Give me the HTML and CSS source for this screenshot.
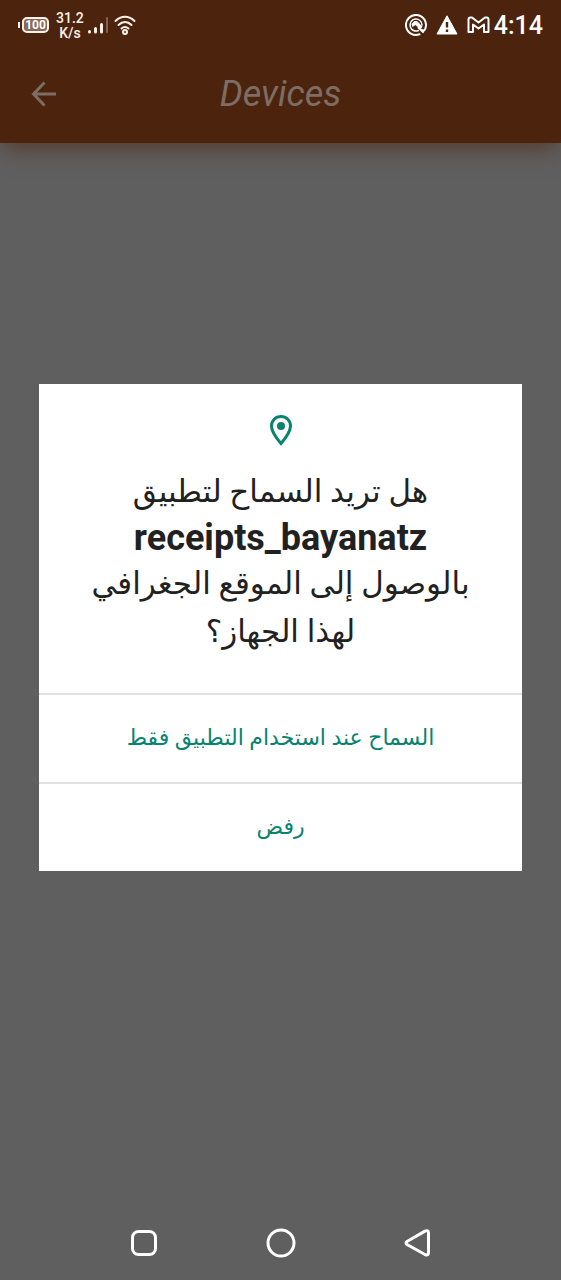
FILE: index.html
```html
<!DOCTYPE html>
<html lang="ar">
<head>
<meta charset="utf-8">
<meta name="viewport" content="width=device-width, initial-scale=1">
<title>Devices</title>
<link rel="stylesheet" href="styles.css">
</head>
<body>
<div class="screen">
  <header class="top">
    <div class="status">
      <div class="status-left">
        <div class="battery"><span class="battery-level">100</span></div>
        <div class="speed"><span>31.2</span><span>K/s</span></div>
        <svg class="signal" width="20" height="18" viewBox="0 0 20 18" fill="none" stroke-width="3" stroke-linecap="round">
          <path d="M1.500 15.500v.5M7.500 12.500V16M13.500 8.500V16" stroke="#fff1e8"/>
          <path d="M19 2v14" stroke="#865f4b" stroke-width="2"/>
        </svg>
        <svg class="wifi" width="22" height="21" viewBox="0 0 22 21" fill="none" stroke="#fff1e8" stroke-width="2" stroke-linecap="round">
          <path d="M1.500 6C7 .3 15 .3 20.500 6M4.500 10C8.500 6 13.500 6 17.500 10M7.500 13.500C9.800 11.500 12.200 11.500 14.500 13.500"/>
          <circle cx="11" cy="17" r="2"/>
        </svg>
      </div>
      <div class="status-right">
        <svg width="22" height="22" viewBox="0 0 22 22" fill="none" stroke="#fff" stroke-width="2">
          <path d="M14.500 20.300A10 10 0 1 1 20.500 14C20 16 18.500 17.500 17 16" stroke-linecap="round"/>
          <path d="M13.500 16.500A6 6 0 1 1 17 11" stroke-width="1.500" stroke-linecap="round"/>
          <path d="M6.500 10L9.500 7H12L17.500 12.500L15.500 15.500L10.500 11L7.500 13Z" fill="#fff" stroke="none"/>
          <path d="M13.500 13.500L18 18" stroke-linecap="round"/>
        </svg>
        <svg width="22" height="20" viewBox="0 0 22 20">
          <path d="M11 .8L21 19H1Z" fill="#fff" stroke="#fff" stroke-linejoin="round"/>
          <path d="M11 7v5.500M11 14.500v2.500" stroke="#4b240d" stroke-width="2.400"/>
        </svg>
        <svg class="mail" width="23" height="18" viewBox="0 0 23 18" fill="none" stroke="#fff" stroke-width="2" stroke-linejoin="round">
          <path d="M1.500 3.500Q1.500 1.500 3.500 1.500H5L11.500 6.500L18 1.500H19.500Q21.500 1.500 21.500 3.500V16H17V8.500L11.500 12.500L6 8.500V16H1.500Z"/>
        </svg>
        <time class="clock">4:14</time>
      </div>
    </div>
    <div class="appbar">
      <button class="back" aria-label="Back">
        <svg width="26" height="26" viewBox="0 0 26 26" fill="none" stroke="currentColor" stroke-width="3"><path d="M25 13H3M13.500 1.500L2.500 13L13.500 24.500"/></svg>
      </button>
      <h1 class="title">Devices</h1>
    </div>
  </header>
  <main class="content">
    <section class="dialog" role="dialog" aria-labelledby="question" dir="rtl">
      <div class="message">
        <svg class="pin" width="24" height="32" viewBox="0 0 24 32"><path d="M12 2.500C6.500 2.500 2.500 6.700 2.500 12C2.500 18.500 12 29.500 12 29.500S21.500 18.500 21.500 12C21.500 6.700 17.500 2.500 12 2.500Z" fill="none" stroke="#07836f" stroke-width="3"/><circle cx="12" cy="12" r="4" fill="#07836f"/></svg>
        <h2 class="question" id="question">هل تريد السماح لتطبيق <strong class="app-name">receipts_bayanatz</strong> بالوصول إلى الموقع الجغرافي<br>لهذا الجهاز؟</h2>
      </div>
      <button class="choice">السماح عند استخدام التطبيق فقط</button>
      <button class="choice">رفض</button>
    </section>
  </main>
  <nav class="navbar">
    <button class="nav-button" aria-label="Recent apps"><svg width="30" height="30" viewBox="0 0 30 30"><rect x="3.500" y="3.500" width="23" height="23" rx="6"/></svg></button>
    <button class="nav-button" aria-label="Home"><svg width="30" height="30" viewBox="0 0 30 30"><circle cx="15" cy="15" r="13"/></svg></button>
    <button class="nav-button" aria-label="Back"><svg width="30" height="30" viewBox="0 0 30 30"><path d="M4 13.500L22 3.200Q25.500 1.500 25.500 5V24.500Q25.500 28 22 26.500L4 16.500Q2 15 4 13.500Z"/></svg></button>
  </nav>
</div>
</body>
</html>
```
FILE: styles.css
```css
* { box-sizing: border-box; }
body {
  margin: 0;
  background: #5f5f5f;
  font-family: Roboto, "Noto Sans", "DejaVu Sans", sans-serif;
}
button {
  border: 0;
  padding: 0;
  background: none;
  font: inherit;
  cursor: pointer;
}
svg { display: block; flex: none; }
.screen {
  display: flex;
  flex-direction: column;
  min-height: 100vh;
}
.top {
  background: #4c240d;
  box-shadow: 0 10px 20px -4px #4c240d99;
}
.status {
  display: flex;
  justify-content: space-between;
  align-items: center;
  height: 50px;
  padding: 0 18px;
  color: #fff;
}
.status-left, .status-right {
  display: flex;
  align-items: center;
}
.status-right { gap: 9px; }
.battery {
  display: flex;
  align-items: center;
  gap: 2px;
}
.battery::before {
  content: "";
  width: 2px;
  height: 6px;
  background: #fff1e8;
}
.battery-level {
  width: 27px;
  border: 2px solid #fff1e8;
  border-radius: 5px;
  background: #866a5c;
  font-size: 12px;
  font-weight: 700;
  line-height: 12px;
  text-align: center;
}
.speed {
  display: flex;
  flex-direction: column;
  align-items: flex-end;
  margin: 0 4px 0 7px;
  color: #fff1e8;
  font-size: 14px;
  font-weight: 500;
  line-height: 14px;
}
.speed span:first-child { line-height: 16px; }
.speed span:last-child { padding-right: 3px; }
.wifi { margin-left: 6px; }
.clock {
  margin-left: -5px;
  font-size: 25px;
  font-weight: 500;
}
.appbar {
  display: grid;
  grid-template-columns: 26px 1fr 26px;
  align-items: center;
  height: 93px;
  padding: 0 31px 6px;
  color: #7d6d64;
}
.back { color: inherit; }
.title {
  margin: 0;
  font-size: 36px;
  font-style: italic;
  font-weight: 400;
  line-height: 42px;
  text-align: center;
}
.content {
  flex: 1;
  padding: 241px 39px 40px;
}
.dialog {
  background: #fff;
  color: #212121;
}
.message {
  display: flex;
  flex-direction: column;
  align-items: center;
  padding: 30px 24px 37px;
}
.question {
  margin: 22px 0 0;
  font-size: 31px;
  font-weight: 400;
  line-height: 48px;
  text-align: center;
}
.app-name {
  display: block;
  font-size: 36px;
  font-weight: 700;
  line-height: 44px;
}
.choice {
  display: block;
  width: 100%;
  height: 89px;
  padding-bottom: 2px;
  border-top: 2px solid #e0e0e0;
  color: #07836f;
  font-size: 22px;
}
.navbar {
  display: flex;
  height: 75px;
  padding: 0 75px;
}
.nav-button {
  display: flex;
  flex: 1;
  align-items: center;
  justify-content: center;
}
.nav-button svg {
  fill: none;
  stroke: #fff;
  stroke-width: 3;
}
```
